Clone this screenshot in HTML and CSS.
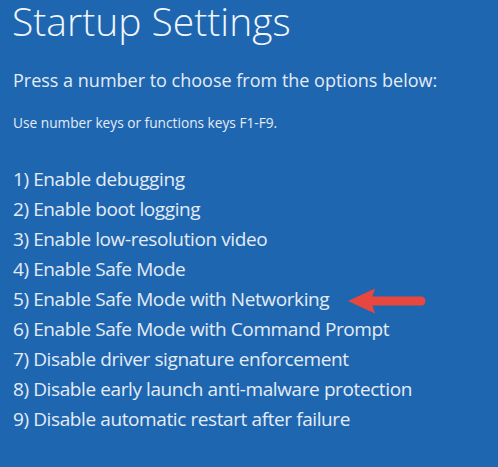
FILE: index.html
```html
<!DOCTYPE html>
<html lang="en">
<head>
<meta charset="utf-8">
<title>Startup Settings</title>
<link rel="stylesheet" href="styles.css">
</head>
<body>
<main class="screen">
  <h1 class="title">Startup Settings</h1>
  <p class="lead">Press a number to choose from the options below:</p>
  <p class="hint">Use number keys or functions keys F1-F9.</p>
  <ol class="options">
    <li>1) Enable debugging</li>
    <li>2) Enable boot logging</li>
    <li>3) Enable low-resolution video</li>
    <li>4) Enable Safe Mode</li>
    <li>5) Enable Safe Mode with Networking</li>
    <li>6) Enable Safe Mode with Command Prompt</li>
    <li>7) Disable driver signature enforcement</li>
    <li>8) Disable early launch anti-malware protection</li>
    <li>9) Disable automatic restart after failure</li>
  </ol>
  <svg class="arrow" width="78" height="26" viewBox="0 0 78 26" aria-hidden="true">
    <path d="M0 13 L27 0.5 L23 13 L27 25.5 Z" fill="#e8473f"/>
    <path d="M22 13 H73" stroke="#e8473f" stroke-width="9" stroke-linecap="round"/>
  </svg>
</main>
</body>
</html>
```
FILE: styles.css
```css
html, body {
  margin: 0;
  padding: 0;
  background: #1f66b0;
}
.screen {
  position: relative;
  width: 498px;
  height: 467px;
  box-sizing: border-box;
  padding: 0 0 0 12px;
  display: flex;
  flex-direction: column;
  color: #e4ecf6;
  font-family: "Open Sans", "Noto Sans", sans-serif;
  overflow: hidden;
}
.title {
  margin: 0;
  font-size: 39px;
  line-height: 42px;
  font-weight: 300;
  color: #f2f6fb;
}
.lead {
  margin: 26px 0 0 1px;
  font-size: 18px;
  line-height: 24px;
  font-weight: 400;
}
.hint {
  margin: 22px 0 0 1px;
  font-size: 13.7px;
  line-height: 18px;
}
.options {
  list-style: none;
  margin: 32px 0 0 1px;
  padding: 0;
  font-size: 19px;
  line-height: 30px;
  letter-spacing: -0.4px;
}
.arrow {
  position: absolute;
  left: 348px;
  top: 288px;
}
```
